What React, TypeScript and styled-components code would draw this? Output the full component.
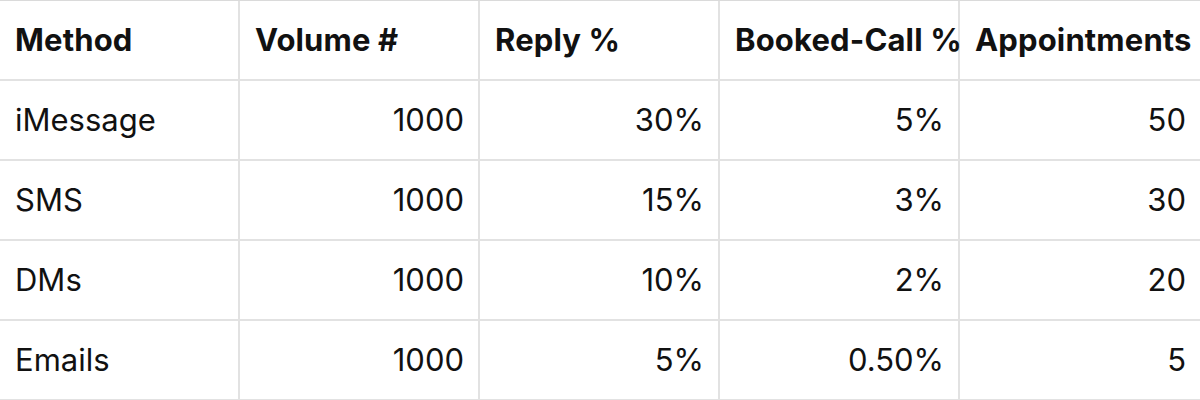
import React from "react";
import styled, { createGlobalStyle } from "styled-components";

const GlobalStyle = createGlobalStyle`
  body {
    margin: 0;
    background: #ffffff;
    font-family: Inter, "Liberation Sans", sans-serif;
    color: #111111;
  }
`;

const Table = styled.div`
  display: grid;
  grid-template-columns: repeat(5, 240px);
  grid-auto-rows: 80px;
  width: 1200px;
  border-top: 1px solid #dadada;
`;

interface CellProps {
  $head?: boolean;
  $right?: boolean;
  $last?: boolean;
}

const Cell = styled.div<CellProps>`
  display: flex;
  align-items: center;
  justify-content: ${(p) => (p.$right ? "flex-end" : "flex-start")};
  padding: 0 14px 2px 15px;
  border-right: ${(p) => (p.$last ? "none" : "2px solid #e2e2e2")};
  border-bottom: 2px solid #e2e2e2;
  font-size: 31px;
  font-weight: ${(p) => (p.$head ? 700 : 400)};
  letter-spacing: ${(p) => (p.$head ? "0.15px" : "0")};
  white-space: nowrap;
  overflow: visible;
`;

const headers = ["Method", "Volume #", "Reply %", "Booked-Call %", "Appointments"];

const rows = [
  ["iMessage", "1000", "30%", "5%", "50"],
  ["SMS", "1000", "15%", "3%", "30"],
  ["DMs", "1000", "10%", "2%", "20"],
  ["Emails", "1000", "5%", "0.50%", "5"],
];

const App: React.FC = () => {
  return (
    <>
      <GlobalStyle />
      <Table>
        {headers.map((h, i) => (
          <Cell key={h} $head $last={i === 4}>
            {h}
          </Cell>
        ))}
        {rows.map((r) =>
          r.map((v, i) => (
            <Cell key={r[0] + i} $right={i > 0} $last={i === 4}>
              {v}
            </Cell>
          ))
        )}
      </Table>
    </>
  );
};

export default App;
